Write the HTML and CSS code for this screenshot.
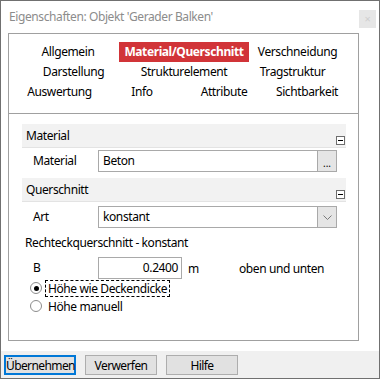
FILE: index.html
```html
<!DOCTYPE html>
<html lang="de">
<head>
  <meta charset="UTF-8">
  <title>Eigenschaften</title>
  <link rel="stylesheet" href="styles.css">
</head>
<body>
  <div class="window">
    <div class="titlebar">
      <span class="title">Eigenschaften: Objekt 'Gerader Balken'</span>
      <span class="close">×</span>
    </div>

    <div class="panel">
      <!-- Reiter -->
      <div class="tabs">
        <div class="tab-row row1">
          <span class="tab">Allgemein</span>
          <span class="tab active">Material/Querschnitt</span>
          <span class="tab">Verschneidung</span>
        </div>
        <div class="tab-row row2">
          <span class="tab">Darstellung</span>
          <span class="tab">Strukturelement</span>
          <span class="tab">Tragstruktur</span>
        </div>
        <div class="tab-row row3">
          <span class="tab">Auswertung</span>
          <span class="tab">Info</span>
          <span class="tab">Attribute</span>
          <span class="tab">Sichtbarkeit</span>
        </div>
      </div>

      <div class="content">
        <div class="section-head">
          <span>Material</span>
          <span class="collapse"></span>
        </div>
        <div class="field-row first">
          <span class="label">Material</span>
          <div class="field">
            <span class="value">Beton</span>
            <span class="side-btn dots">...</span>
          </div>
        </div>

        <div class="section-head">
          <span>Querschnitt</span>
          <span class="collapse"></span>
        </div>
        <div class="field-row second">
          <span class="label">Art</span>
          <div class="field">
            <span class="value">konstant</span>
            <span class="side-btn">
              <svg width="9" height="5" viewBox="0 0 9 5"><polyline points="0.5,0.5 4.5,4.5 8.5,0.5" fill="none" stroke="#7a7a7a" stroke-width="1"/></svg>
            </span>
          </div>
        </div>

        <div class="rect-block">
          <div class="rect-title">Rechteckquerschnitt - konstant</div>
          <div class="b-row">
            <span class="label">B</span>
            <span class="num-input">0.2400</span>
            <span class="unit">m</span>
            <span class="note">oben und unten</span>
          </div>
          <div class="radio-row">
            <span class="radio checked"></span>
            <span class="radio-label focused">Höhe wie Deckendicke</span>
          </div>
          <div class="radio-row">
            <span class="radio"></span>
            <span class="radio-label">Höhe manuell</span>
          </div>
        </div>
      </div>
    </div>

    <div class="footer">
      <button class="primary">Übernehmen</button>
      <button>Verwerfen</button>
      <button>Hilfe</button>
    </div>
  </div>
</body>
</html>
```

FILE: styles.css
```css
* {
  box-sizing: border-box;
}
body {
  margin: 0;
  font-family: "Noto Sans", "Liberation Sans", sans-serif;
  font-size: 12px;
  letter-spacing: -0.4px;
  color: #000;
}
.window {
  width: 380px;
  height: 379px;
  border: 1px solid #707070;
  background: #fff;
  display: flex;
  flex-direction: column;
}
.titlebar {
  height: 32px;
  display: flex;
  justify-content: space-between;
  align-items: flex-start;
  padding-left: 8px;
  padding-right: 3px;
}
.title {
  color: #8c8c8c;
  line-height: 16px;
  margin-top: 8px;
}
.close {
  width: 17px;
  height: 18px;
  margin-top: 9px;
  background: #e6e6e6;
  color: #cfcfcf;
  font-size: 11px;
  line-height: 18px;
  text-align: center;
}
.panel {
  height: 308px;
  margin: 0 20px 0 7px;
  border: 1px solid #a0a0a0;
  display: flex;
  flex-direction: column;
}
.tabs {
  height: 80px;
  border-bottom: 1px solid #a0a0a0;
  padding-top: 8px;
}
.tab-row {
  display: grid;
  height: 20px;
}
.row1 {
  padding-left: 8px;
  grid-template-columns: 102px 130px 97px;
}
.row2 {
  padding-left: 1px;
  grid-template-columns: 127px 94px 123px;
}
.row3 {
  padding-left: 1px;
  grid-template-columns: 99px 66px 98px 68px;
}
.tab {
  text-align: center;
  line-height: 20px;
  white-space: nowrap;
}
.tab.active {
  background: #d13438;
  color: #fff;
  font-weight: bold;
}
.content {
  flex: 1;
  padding: 10px 12px 0 13px;
}
.section-head {
  height: 24px;
  background: #f2f2f2;
  border-bottom: 1px solid #e3e3e3;
  display: flex;
  justify-content: space-between;
  padding-left: 4px;
  padding-right: 1px;
}
.section-head span:first-child {
  line-height: 23px;
}
.collapse {
  align-self: flex-end;
  margin-bottom: 2px;
  width: 9px;
  height: 9px;
  border: 1px solid #6d6d6d;
  background: #fff;
  position: relative;
}
.collapse::after {
  content: "";
  position: absolute;
  left: 1px;
  top: 3px;
  width: 5px;
  height: 1px;
  background: #000;
}
.field-row {
  display: flex;
  align-items: flex-start;
  padding-left: 11px;
}
.field-row.first {
  padding-top: 2px;
  height: 30px;
}
.field-row.second {
  padding-top: 4px;
  height: 31px;
}
.label {
  width: 65px;
  line-height: 22px;
}
.field {
  width: 239px;
  height: 22px;
  border: 1px solid #a9a9a9;
  display: flex;
  justify-content: space-between;
}
.value {
  padding-left: 4px;
  line-height: 20px;
}
.side-btn {
  width: 19px;
  border-left: 1px solid #a9a9a9;
  background: #e5e5e5;
  display: flex;
  align-items: center;
  justify-content: center;
}
.side-btn.dots {
  font-size: 10px;
  letter-spacing: 0;
  align-items: flex-end;
  padding-bottom: 2px;
  line-height: 12px;
}
.rect-block {
  padding-left: 3px;
  padding-top: 1px;
}
.rect-title {
  line-height: 18px;
  margin-bottom: 5px;
}
.b-row {
  display: flex;
  align-items: center;
  padding-left: 8px;
  height: 22px;
}
.num-input {
  width: 84px;
  height: 22px;
  border: 1px solid #a9a9a9;
  text-align: right;
  padding-right: 3px;
  line-height: 20px;
}
.unit {
  margin-left: 6px;
  width: 51px;
}
.radio-row {
  display: flex;
  align-items: center;
  height: 18px;
  padding-left: 5px;
}
.radio-row:first-of-type {
  margin-top: -1px;
}
.radio {
  width: 12px;
  height: 12px;
  border: 1px solid #8c8c8c;
  border-radius: 50%;
  background: #fff;
  position: relative;
}
.radio.checked::after {
  content: "";
  position: absolute;
  left: 2.5px;
  top: 2.5px;
  width: 5px;
  height: 5px;
  border-radius: 50%;
  background: #000;
}
.radio-label {
  margin-left: 3px;
  padding: 0 2px;
  line-height: 15px;
  border: 1px dashed transparent;
}
.radio-label.focused {
  border-color: #000;
}
.footer {
  margin-top: 10px;
  flex: 1;
  background: #f0f0f0;
  padding: 4px 0 0 3px;
  display: flex;
  gap: 9px;
  align-items: flex-start;
}
.footer button {
  width: 72px;
  height: 20px;
  font-family: inherit;
  font-size: 12px;
  letter-spacing: -0.6px;
  padding: 0;
  background: #e1e1e1;
  border: 1px solid #adadad;
  color: #000;
}
.footer button.primary {
  border: 2px solid #0078d7;
}
```
